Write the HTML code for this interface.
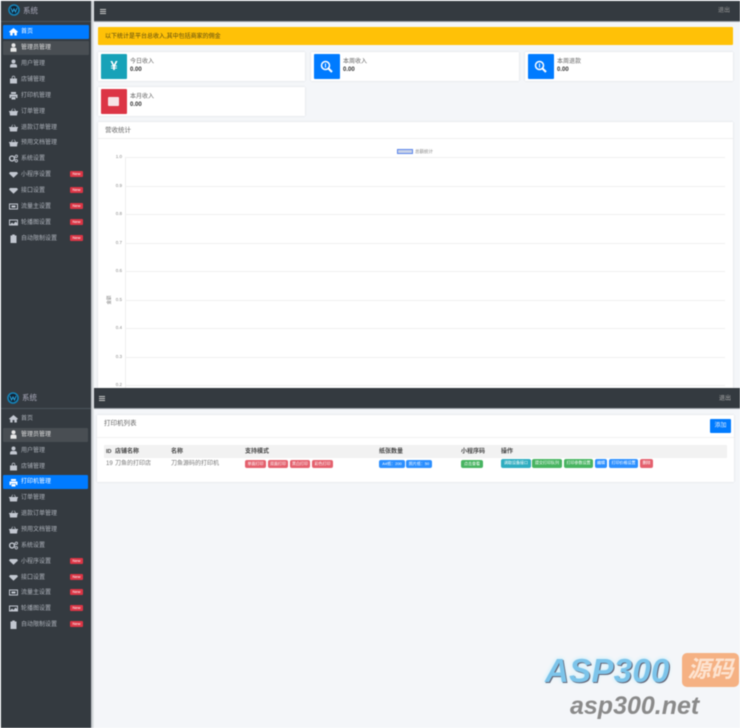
<!DOCTYPE html>
<html><head><meta charset="utf-8"><style>
html,body{margin:0;padding:0;background:#fff}
#p{position:relative;width:740px;height:728px;overflow:hidden;background:#f4f6f9;font-family:"Liberation Sans","Noto Sans CJK SC",sans-serif;color:#555;filter:blur(.55px)}
#p div,#p span{position:absolute;white-space:nowrap;box-sizing:border-box}
.side{background:#343a40;left:1px;width:90px}
.nav{background:#343a40;left:91px;width:649px}
.sh{background:linear-gradient(90deg,#b4b9bd,#eceef1);width:3px;left:91px}
.it{left:21px;font-size:6px;line-height:8px;color:#aeb3bb;margin-top:1px}
.ic{position:absolute;left:9px;width:9px;height:9px;fill:#c2c7d0}
.new{left:70px;width:13px;height:6px;background:#dc3545;border-radius:1px;color:#fff;font-size:4px;line-height:6px;text-align:center}
.card{background:#fff;box-shadow:0 0 2px rgba(0,0,0,.12);border-radius:1px}
.bx{width:26px;height:25px;border-radius:1px;color:#fff;text-align:center;font-size:13px;line-height:24px;font-weight:bold}
.t1{font-size:6px;line-height:8px;color:#666;margin-top:1px}
.t2{font-size:6px;line-height:8px;color:#333;font-weight:bold;margin-top:1px}
.g{left:125px;width:600px;height:1px;background:#f0f0f0}
.y{left:114px;width:8px;font-size:4.5px;line-height:6px;color:#888;text-align:right}
.th{font-size:6px;line-height:8px;font-weight:bold;color:#444;top:448px}
.td{font-size:6px;line-height:8px;color:#777;top:460px}
.b{height:8px;top:460px;border-radius:2px;color:#fff;font-size:4px;line-height:8px;text-align:center;overflow:hidden}
.op{height:9px;top:459px}
.bars{position:absolute;width:6px;height:5px;border-top:1px solid #c8c8c8;border-bottom:1px solid #c8c8c8}
.bars:after{content:"";position:absolute;left:0;right:0;top:1px;height:1px;background:#c8c8c8}
</style></head><body><div id="p">

<svg width="0" height="0" style="position:absolute"><defs>
<symbol id="home" viewBox="0 0 9 9"><path d="M0 4.800L4.500 1 9 4.800 8.300 5.500 7.800 5.100V8.500H5.400V6H3.600V8.500H1.200V5.100L.7 5.500Z"/></symbol>
<symbol id="user" viewBox="0 0 9 9"><circle cx="4.500" cy="2.500" r="2"/><path d="M1 8.500V6.800C1 5.600 2 5 3 5H6C7 5 8 5.600 8 6.800V8.500Z"/></symbol>
<symbol id="tie" viewBox="0 0 9 9"><circle cx="4.500" cy="2.300" r="2"/><path d="M1.500 8.800V6C1.500 5 2.300 4.600 3 4.600H6C6.700 4.600 7.500 5 7.500 6V8.800Z"/></symbol>
<symbol id="bag" viewBox="0 0 9 9"><path d="M1 3.500H2.800V2.500A1.700 1.700 0 0 1 6.200 2.500V3.500H8V8.500H1ZM3.500 3.500H5.500V2.500A1 1 0 0 0 3.500 2.500Z" fill-rule="evenodd"/></symbol>
<symbol id="print" viewBox="0 0 9 9"><path d="M2 1H7V3H2ZM.5 3.500H8.500V7H7V5.500H2V7H.5ZM2.500 6H6.500V8.500H2.500Z"/></symbol>
<symbol id="basket" viewBox="0 0 9 9"><path d="M0 4H2L3.500 1.500 4 1.800 2.800 4H6.200L5 1.800 5.500 1.500 7 4H9V5H8.500L8 8.500H1L.5 5H0Z"/></symbol>
<symbol id="cogs" viewBox="0 0 9 9"><circle cx="3" cy="4.500" r="2.400" fill="none" stroke="#c2c7d0" stroke-width="1.400"/><circle cx="7.300" cy="2.300" r="1.200" fill="none" stroke="#c2c7d0" stroke-width=".9"/><circle cx="7.300" cy="6.800" r="1.200" fill="none" stroke="#c2c7d0" stroke-width=".9"/></symbol>
<symbol id="gem" viewBox="0 0 9 9"><path d="M1 2H8L9 3.500 4.500 7.800 0 3.500Z"/></symbol>
<symbol id="card" viewBox="0 0 9 9"><path d="M0 1.500H9V7.500H0ZM1 2.500V6.500H8V2.500ZM2.500 3.500H6.500V5.500H2.500Z" fill-rule="evenodd"/></symbol>
<symbol id="img" viewBox="0 0 9 9"><path d="M0 1.500H9V7.500H0ZM1 2.500V6.500L3 4.500 4.500 6 6.500 3.500 8 5V2.500Z" fill-rule="evenodd"/></symbol>
<symbol id="clip" viewBox="0 0 9 9"><path d="M1.500 1.500H3.200V.5H5.800V1.500H7.500V9H1.500Z"/></symbol>
<symbol id="zoom" viewBox="0 0 13 13"><circle cx="5.500" cy="5.500" r="4" fill="none" stroke="#fff" stroke-width="1.500"/><path d="M8.500 8.500l3.500 3.500" stroke="#fff" stroke-width="2"/><path d="M5.500 3.500v4" stroke="#fff"/></symbol>
</defs></svg>

<div class="side" style="top:1px;height:387px"></div>
<div class="nav" style="top:1px;height:20px"></div>
<div style="left:91px;top:21px;width:649px;height:1px;background:#9aa0a5"></div>
<div class="sh" style="top:1px;height:387px"></div>
<div style="left:1px;top:21px;width:90px;height:1px;background:#4b545c"></div>
<svg style="position:absolute;left:8px;top:4px" width="12" height="12" viewBox="0 0 12 12"><circle cx="6" cy="6" r="5" fill="#123" stroke="#1583b8" stroke-width="1.600"/><path d="M3 4l1.500 4L6 5l1.500 3L9 4" fill="none" stroke="#2aa0d8" stroke-width="1"/></svg>
<div style="left:23px;top:6px;font-size:7.500px;line-height:10px;color:#aab">系统</div>
<div class="bars" style="left:100px;top:9px"></div>
<div style="left:718px;top:7px;font-size:6px;line-height:8px;color:#999">退出</div>

<div style="left:3px;top:25px;width:86px;height:14px;background:#007bff;border-radius:1px"></div>
<div style="left:3px;top:41px;width:86px;height:14px;background:#494e53;border-radius:1px"></div>
<svg class="ic" style="top:27px;fill:#fff"><use href="#home"/></svg><div class="it" style="top:27px;color:#fff">首页</div>
<svg class="ic" style="top:43px;fill:#e8e8e8"><use href="#tie"/></svg><div class="it" style="top:43px;color:#e0e0e0">管理员管理</div>
<svg class="ic" style="top:59px"><use href="#user"/></svg><div class="it" style="top:59px">用户管理</div>
<svg class="ic" style="top:75px"><use href="#bag"/></svg><div class="it" style="top:75px">店铺管理</div>
<svg class="ic" style="top:91px"><use href="#print"/></svg><div class="it" style="top:91px">打印机管理</div>
<svg class="ic" style="top:107px"><use href="#basket"/></svg><div class="it" style="top:107px">订单管理</div>
<svg class="ic" style="top:123px"><use href="#basket"/></svg><div class="it" style="top:123px">退款订单管理</div>
<svg class="ic" style="top:138px"><use href="#basket"/></svg><div class="it" style="top:138px">预用文档管理</div>
<svg class="ic" style="top:154px"><use href="#cogs"/></svg><div class="it" style="top:154px">系统设置</div>
<svg class="ic" style="top:170px"><use href="#gem"/></svg><div class="it" style="top:170px">小程序设置</div><div class="new" style="top:171px">New</div>
<svg class="ic" style="top:186px"><use href="#gem"/></svg><div class="it" style="top:186px">接口设置</div><div class="new" style="top:187px">New</div>
<svg class="ic" style="top:202px"><use href="#card"/></svg><div class="it" style="top:202px">流量主设置</div><div class="new" style="top:203px">New</div>
<svg class="ic" style="top:218px"><use href="#img"/></svg><div class="it" style="top:218px">轮播图设置</div><div class="new" style="top:219px">New</div>
<svg class="ic" style="top:234px"><use href="#clip"/></svg><div class="it" style="top:234px">自动限制设置</div><div class="new" style="top:235px">New</div>

<div style="left:98px;top:27px;width:635px;height:18px;background:#ffc107;border-radius:1px"></div>
<div style="left:105px;top:33px;font-size:6px;line-height:8px;color:#5a4a10">以下统计是平台总收入,其中包括商家的佣金</div>

<div class="card" style="left:98px;top:52px;width:207px;height:29px"></div>
<div class="bx" style="left:101px;top:54px;background:#17a2b8">¥</div>
<div class="t1" style="left:130px;top:57px">今日收入</div><div class="t2" style="left:130px;top:65px">0.00</div>

<div class="card" style="left:311px;top:52px;width:208px;height:29px"></div>
<div class="bx" style="left:314px;top:54px;background:#007bff"></div>
<svg style="position:absolute;left:320px;top:60px" width="13" height="13"><use href="#zoom"/></svg>
<div class="t1" style="left:343px;top:57px">本周收入</div><div class="t2" style="left:343px;top:65px">0.00</div>

<div class="card" style="left:525px;top:52px;width:208px;height:29px"></div>
<div class="bx" style="left:528px;top:54px;background:#007bff"></div>
<svg style="position:absolute;left:534px;top:60px" width="13" height="13"><use href="#zoom"/></svg>
<div class="t1" style="left:557px;top:57px">本周退款</div><div class="t2" style="left:557px;top:65px">0.00</div>

<div class="card" style="left:98px;top:87px;width:207px;height:29px"></div>
<div class="bx" style="left:101px;top:89px;background:#dc3545"></div>
<div style="left:108px;top:97px;width:11px;height:9px;background:#f6e3e5;border-radius:1px"></div>
<div class="t1" style="left:130px;top:92px">本月收入</div><div class="t2" style="left:130px;top:100px">0.00</div>

<div class="card" style="left:98px;top:122px;width:635px;height:268px"></div>
<div style="left:98px;top:138px;width:635px;height:1px;background:#f0f0f0"></div>
<div style="left:105px;top:126px;font-size:6.500px;line-height:9px;color:#666">营收统计</div>
<div style="left:397px;top:149px;width:16px;height:5px;background:#c9d3e8;border:1px solid #5b85ea"></div>
<div style="left:415px;top:149px;font-size:4.500px;line-height:6px;color:#888">总额统计</div>
<div style="left:125px;top:157px;width:1px;height:232px;background:#eee"></div>
<div class="g" style="top:157px"></div><div class="y" style="top:154px">1.0</div>
<div class="g" style="top:186px"></div><div class="y" style="top:183px">0.9</div>
<div class="g" style="top:214px"></div><div class="y" style="top:211px">0.8</div>
<div class="g" style="top:243px"></div><div class="y" style="top:240px">0.7</div>
<div class="g" style="top:271px"></div><div class="y" style="top:268px">0.6</div>
<div class="g" style="top:300px"></div><div class="y" style="top:297px">0.5</div>
<div class="g" style="top:328px"></div><div class="y" style="top:325px">0.4</div>
<div class="g" style="top:357px"></div><div class="y" style="top:354px">0.3</div>
<div class="g" style="top:385px"></div><div class="y" style="top:382px">0.2</div>
<div style="left:105px;top:297px;font-size:4.500px;line-height:6px;color:#777;transform:rotate(-90deg)">金额</div>

<div style="left:0;top:388px;width:740px;height:340px;background:#f4f6f9"></div>
<div class="side" style="top:388px;height:340px"></div>
<div class="nav" style="top:388px;height:20px"></div>
<div style="left:91px;top:408px;width:649px;height:1px;background:#9aa0a5"></div>
<div class="sh" style="top:388px;height:340px"></div>
<div style="left:1px;top:408px;width:90px;height:1px;background:#4b545c"></div>
<svg style="position:absolute;left:7px;top:392px" width="12" height="12" viewBox="0 0 12 12"><circle cx="6" cy="6" r="5" fill="#123" stroke="#1583b8" stroke-width="1.600"/><path d="M3 4l1.500 4L6 5l1.500 3L9 4" fill="none" stroke="#2aa0d8" stroke-width="1"/></svg>
<div style="left:22px;top:393px;font-size:7.500px;line-height:10px;color:#aab">系统</div>
<div class="bars" style="left:99px;top:396px"></div>
<div style="left:719px;top:395px;font-size:6px;line-height:8px;color:#aaa">退出</div>

<div style="left:3px;top:428px;width:85px;height:14px;background:#494e53;border-radius:1px"></div>
<div style="left:3px;top:475px;width:85px;height:14px;background:#007bff;border-radius:1px"></div>
<svg class="ic" style="top:414px"><use href="#home"/></svg><div class="it" style="top:414px">首页</div>
<svg class="ic" style="top:430px;fill:#e8e8e8"><use href="#tie"/></svg><div class="it" style="top:430px;color:#e0e0e0">管理员管理</div>
<svg class="ic" style="top:446px"><use href="#user"/></svg><div class="it" style="top:446px">用户管理</div>
<svg class="ic" style="top:462px"><use href="#bag"/></svg><div class="it" style="top:462px">店铺管理</div>
<svg class="ic" style="top:478px;fill:#fff"><use href="#print"/></svg><div class="it" style="top:477px;color:#fff">打印机管理</div>
<svg class="ic" style="top:493px"><use href="#basket"/></svg><div class="it" style="top:493px">订单管理</div>
<svg class="ic" style="top:509px"><use href="#basket"/></svg><div class="it" style="top:509px">退款订单管理</div>
<svg class="ic" style="top:525px"><use href="#basket"/></svg><div class="it" style="top:525px">预用文档管理</div>
<svg class="ic" style="top:541px"><use href="#cogs"/></svg><div class="it" style="top:541px">系统设置</div>
<svg class="ic" style="top:557px"><use href="#gem"/></svg><div class="it" style="top:557px">小程序设置</div><div class="new" style="top:558px">New</div>
<svg class="ic" style="top:573px"><use href="#gem"/></svg><div class="it" style="top:573px">接口设置</div><div class="new" style="top:574px">New</div>
<svg class="ic" style="top:588px"><use href="#card"/></svg><div class="it" style="top:588px">流量主设置</div><div class="new" style="top:589px">New</div>
<svg class="ic" style="top:604px"><use href="#img"/></svg><div class="it" style="top:604px">轮播图设置</div><div class="new" style="top:605px">New</div>
<svg class="ic" style="top:620px"><use href="#clip"/></svg><div class="it" style="top:620px">自动限制设置</div><div class="new" style="top:621px">New</div>

<div class="card" style="left:97px;top:415px;width:637px;height:67px"></div>
<div style="left:97px;top:437px;width:637px;height:1px;background:#f2f2f2"></div>
<div style="left:104px;top:419px;font-size:6.500px;line-height:9px;color:#666">打印机列表</div>
<div style="left:710px;top:419px;width:21px;height:14px;background:#007bff;border-radius:1px;color:#dfeeff;font-size:6px;line-height:14px;text-align:center">添加</div>

<div style="left:104px;top:445px;width:623px;height:13px;background:#f2f2f2"></div>
<div class="th" style="left:106px;font-size:5.500px">ID</div>
<div class="th" style="left:115px">店铺名称</div>
<div class="th" style="left:171px">名称</div>
<div class="th" style="left:245px">支持模式</div>
<div class="th" style="left:379px">纸张数量</div>
<div class="th" style="left:461px">小程序码</div>
<div class="th" style="left:501px">操作</div>
<div class="td" style="left:106px">19</div>
<div class="td" style="left:115px">刀鱼的打印店</div>
<div class="td" style="left:171px">刀鱼源码的打印机</div>
<div class="b" style="left:245px;width:21px;background:#e4606d">单面打印</div>
<div class="b" style="left:268px;width:20px;background:#e4606d">双面打印</div>
<div class="b" style="left:290px;width:20px;background:#e4606d">黑白打印</div>
<div class="b" style="left:312px;width:21px;background:#e4606d">彩色打印</div>
<div class="b" style="left:379px;width:26px;background:#2b8fff">A4纸：200</div>
<div class="b" style="left:406px;width:26px;background:#2b8fff">照片纸：50</div>
<div class="b" style="left:461px;width:22px;background:#48b461">点击查看</div>
<div class="b op" style="left:501px;width:30px;background:#2fadc0">调取设备接口</div>
<div class="b op" style="left:532px;width:30px;background:#48b461">提交打印队列</div>
<div class="b op" style="left:564px;width:29px;background:#48b461">打印参数设置</div>
<div class="b op" style="left:595px;width:12px;background:#2b8fff">编辑</div>
<div class="b op" style="left:609px;width:29px;background:#2b8fff">打印价格设置</div>
<div class="b op" style="left:640px;width:13px;background:#e4606d">删除</div>

<div style="left:545px;top:652px;font-size:33px;line-height:38px;font-weight:bold;font-style:italic;color:#7cc4ea;letter-spacing:.3px;text-shadow:1px 1px 0 #667,0 0 4px #b8ecff">ASP300</div>
<div style="left:682px;top:653px;width:57px;height:34px;background:#f5b183;border-radius:5px;color:#fde3d0;font-size:23px;line-height:33px;font-weight:bold;font-style:italic;text-align:center">源码</div>
<div style="left:570px;top:692px;font-size:25px;line-height:28px;font-weight:bold;font-style:italic;color:#8a8a8a">asp300.net</div>

</div></body></html>
